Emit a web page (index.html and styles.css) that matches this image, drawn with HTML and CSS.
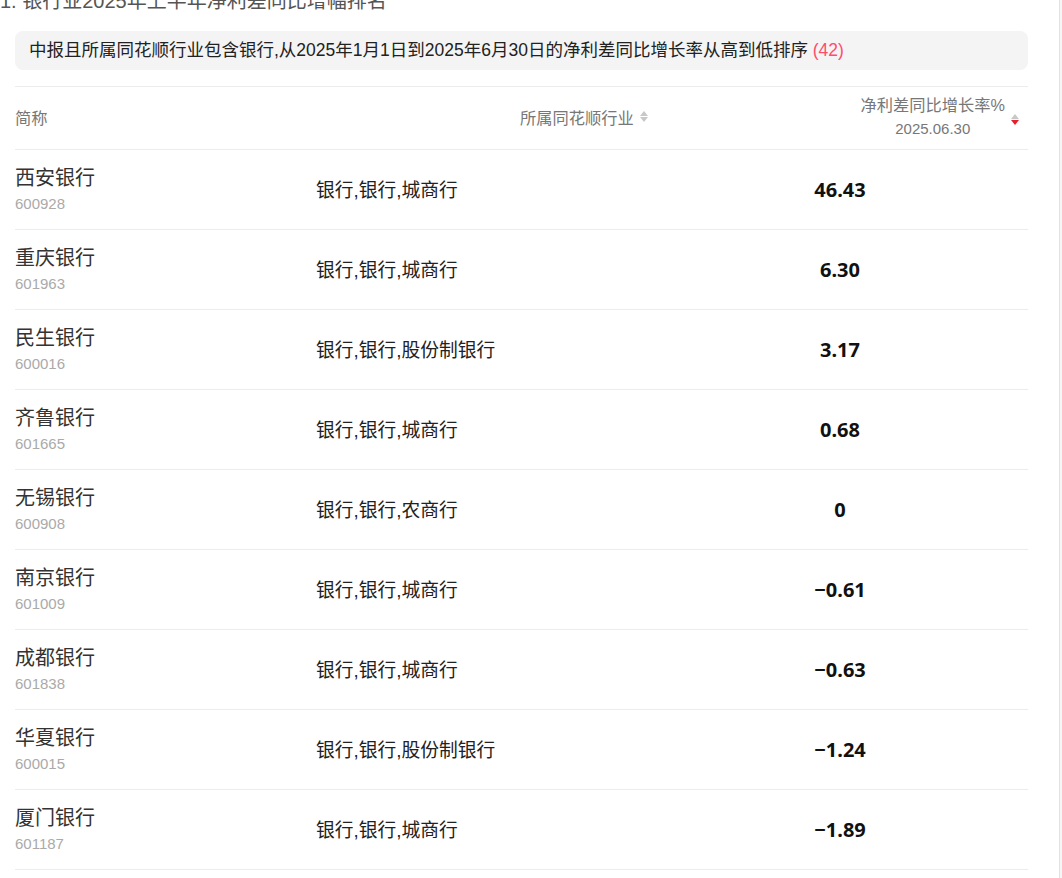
FILE: index.html
```html
<!DOCTYPE html>
<html lang="zh">
<head>
<meta charset="utf-8">
<title>银行业2025年上半年净利差同比增幅排名</title>
<link rel="stylesheet" href="styles.css">
</head>
<body>
<div class="page">
  <div class="title">1. 银行业2025年上半年净利差同比增幅排名</div>
  <div class="card">
    <div class="query">中报且所属同花顺行业包含银行,从2025年1月1日到2025年6月30日的净利差同比增长率从高到低排序 <span class="count">(42)</span></div>
    <div class="table">
      <div class="thead">
        <div class="th th-name">简称</div>
        <div class="th th-ind">所属同花顺行业<span class="sort"><i class="up"></i><i class="down"></i></span></div>
        <div class="th th-val">
          <div class="th-val-text"><div>净利差同比增长率%</div><div class="date">2025.06.30</div></div>
          <span class="sort"><i class="up"></i><i class="down active"></i></span>
        </div>
      </div>
      <div class="row"><div class="name"><div class="n">西安银行</div><div class="code">600928</div></div><div class="ind">银行,银行,城商行</div><div class="val">46.43</div></div>
      <div class="row"><div class="name"><div class="n">重庆银行</div><div class="code">601963</div></div><div class="ind">银行,银行,城商行</div><div class="val">6.30</div></div>
      <div class="row"><div class="name"><div class="n">民生银行</div><div class="code">600016</div></div><div class="ind">银行,银行,股份制银行</div><div class="val">3.17</div></div>
      <div class="row"><div class="name"><div class="n">齐鲁银行</div><div class="code">601665</div></div><div class="ind">银行,银行,城商行</div><div class="val">0.68</div></div>
      <div class="row"><div class="name"><div class="n">无锡银行</div><div class="code">600908</div></div><div class="ind">银行,银行,农商行</div><div class="val">0</div></div>
      <div class="row"><div class="name"><div class="n">南京银行</div><div class="code">601009</div></div><div class="ind">银行,银行,城商行</div><div class="val">−0.61</div></div>
      <div class="row"><div class="name"><div class="n">成都银行</div><div class="code">601838</div></div><div class="ind">银行,银行,城商行</div><div class="val">−0.63</div></div>
      <div class="row"><div class="name"><div class="n">华夏银行</div><div class="code">600015</div></div><div class="ind">银行,银行,股份制银行</div><div class="val">−1.24</div></div>
      <div class="row"><div class="name"><div class="n">厦门银行</div><div class="code">601187</div></div><div class="ind">银行,银行,城商行</div><div class="val">−1.89</div></div>
    </div>
  </div>
</div>
<div class="scroll"></div>
</body>
</html>
```

FILE: styles.css
```css
html, body {
  margin: 0;
  padding: 0;
  height: 100%;
  overflow: hidden;
}
body {
  display: flex;
  background: #fff;
  font-family: "Liberation Sans", "Noto Sans CJK SC", sans-serif;
  color: #333;
}
.page {
  width: 1059px;
  flex: none;
  border-right: 1px solid #e2e2e2;
  background: #fff;
}
.scroll {
  flex: 1;
  background: #f6f6f6;
}
.title {
  font-size: 20px;
  line-height: 28px;
  margin-top: -13px;
  color: #555;
}
.card {
  margin: 16px 31px 0 15px;
}
.query {
  background: #f4f4f4;
  border-radius: 8px;
  padding: 0 14px;
  height: 39px;
  line-height: 39px;
  font-size: 17.5px;
  color: #222;
  white-space: nowrap;
}
.count {
  color: #ff4d6d;
}
.table {
  margin-top: 16px;
}
.thead, .row {
  display: grid;
  grid-template-columns: 301px 444px 1fr;
  border-top: 1px solid #ececec;
  box-sizing: border-box;
}
.thead {
  height: 63px;
  padding-bottom: 3px;
  align-items: center;
  font-size: 16.25px;
  color: #777;
}
.th-ind {
  padding-left: 204px;
  display: flex;
  align-items: center;
}
.th-val {
  display: flex;
  align-items: center;
  justify-content: flex-end;
  padding-right: 9px;
}
.th-val-text {
  text-align: center;
  line-height: 24px;
}
.th-val-text .date {
  font-size: 15px;
}
.sort {
  display: inline-flex;
  flex-direction: column;
  gap: 1px;
  margin-left: 6px;
}
.sort i {
  display: block;
  width: 0;
  height: 0;
  border-left: 4px solid transparent;
  border-right: 4px solid transparent;
}
.sort .up {
  border-bottom: 5px solid #c8c8c8;
}
.sort .down {
  border-top: 5px solid #c8c8c8;
}
.sort .down.active {
  border-top-color: #e5202a;
}
.th-val .sort {
  margin-left: 6px;
  margin-top: 6px;
}
.row {
  height: 80px;
  align-items: center;
}
.row:last-child {
  height: 81px;
  border-bottom: 1px solid #ececec;
}
.name .n {
  font-size: 20px;
  line-height: 24px;
  color: #333;
}
.name .code {
  font-size: 15px;
  line-height: 20px;
  margin-top: 4px;
  color: #aaa;
}
.ind {
  font-size: 18.75px;
  color: #222;
  padding-bottom: 2px;
}
.val {
  width: 160px;
  text-align: center;
  font-family: "Noto Sans", "Liberation Sans", sans-serif;
  font-weight: 700;
  font-size: 20px;
  color: #111;
  padding-bottom: 1px;
}
```
